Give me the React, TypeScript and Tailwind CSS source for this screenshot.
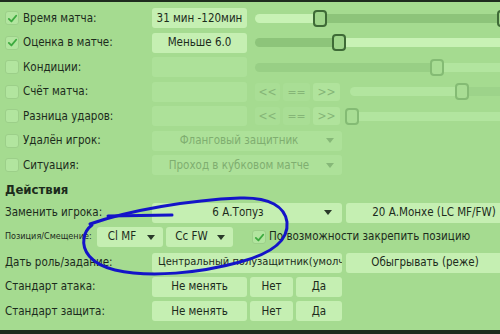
import React from "react";

const font = { fontFamily: '"DejaVu Sans Condensed", "Open Sans", sans-serif' };

function Check({ checked }: { checked?: boolean }) {
  return (
    <div className="w-[14px] h-[14px] shrink-0 rounded-[3px] bg-[#b2e59f] border border-[#9ccf89] flex items-center justify-center">
      {checked && (
        <svg width="11" height="11" viewBox="0 0 12 12">
          <path d="M2 6.5 L4.8 9.2 L10 3" fill="none" stroke="#3daa3f" strokeWidth="2" strokeLinecap="round" strokeLinejoin="round" />
        </svg>
      )}
    </div>
  );
}

function Btn({ children, className = "", faded }: { children?: React.ReactNode; className?: string; faded?: boolean }) {
  return (
    <div
      className={`h-[20px] shrink-0 rounded-[3px] flex items-center justify-center text-[11.5px] whitespace-nowrap overflow-hidden ${
        faded ? "bg-[#ade199] text-[#7fae70]" : "bg-[#c5efb2] text-[#1c2b1c]"
      } ${className}`}
    >
      {children}
    </div>
  );
}

function Arrow({ faded }: { faded?: boolean }) {
  return (
    <svg width="8" height="5" viewBox="0 0 8 5" className="shrink-0">
      <path d="M0 0 H8 L4 5 Z" fill={faded ? "#86b878" : "#2a3a2a"} />
    </svg>
  );
}

function Drop({ text, className = "", faded, arrowPad = "pr-[8px]" }: { text: string; className?: string; faded?: boolean; arrowPad?: string }) {
  return (
    <div
      className={`h-[20px] shrink-0 rounded-[3px] flex items-center text-[11.5px] whitespace-nowrap ${arrowPad} ${
        faded ? "bg-[#ade199] text-[#7fae70]" : "bg-[#c5efb2] text-[#1c2b1c]"
      } ${className}`}
    >
      <span className="flex-1 text-center">{text}</span>
      <Arrow faded={faded} />
    </div>
  );
}

function Thumb({ faded }: { faded?: boolean }) {
  return (
    <div
      className={`w-[14px] h-[17px] shrink-0 rounded-[4px] border-2 ${
        faded ? "border-[#84bb74] bg-[#a8dd94]" : "border-[#3e6a36] bg-[#9fd68b]"
      }`}
    />
  );
}

function Slider({
  pos,
  faded,
  endThumb,
  left,
  right,
}: {
  pos: number;
  faded?: boolean;
  endThumb?: boolean;
  left: string;
  right: string;
}) {
  return (
    <div className="flex-1 relative h-[17px] flex items-center">
      <div className="flex w-full h-[9px]">
        <div className={`h-full rounded-l-full ${left}`} style={{ width: pos + 6 }} />
        <div className={`h-full flex-1 ${right}`} />
      </div>
      <div className="absolute top-0" style={{ left: pos }}>
        <Thumb faded={faded} />
      </div>
      {endThumb && (
        <div className="absolute top-0 left-[242px]">
          <Thumb faded={faded} />
        </div>
      )}
    </div>
  );
}

function Label({ checked, text }: { checked?: boolean; text: string }) {
  return (
    <div className="w-[152px] shrink-0 flex items-center pl-[5px] gap-[4px]">
      <Check checked={checked} />
      <span className="text-[11.5px] text-[#1c2b1c]">{text}</span>
    </div>
  );
}

function Nav() {
  return (
    <div className="flex gap-[3px] text-[12px] text-[#85b577] shrink-0">
      <div className="w-[25px] h-[18px] rounded-[3px] bg-[#a9de95] flex items-center justify-center">&lt;&lt;</div>
      <div className="w-[27px] h-[18px] rounded-[3px] bg-[#a9de95] flex items-center justify-center">==</div>
      <div className="w-[27px] h-[18px] rounded-[3px] bg-[#b0e39c] flex items-center justify-center">&gt;&gt;</div>
    </div>
  );
}

export default function App() {
  return (
    <div className="w-[500px] h-[334px] overflow-hidden relative bg-[#a5db90] border-t-[2px] border-b-[4px] border-[#1e2b1e]" style={font}>
      <div className="pt-[4px]">
        <div className="h-[24.5px] flex items-center">
          <Label checked text="Время матча:" />
          <Btn className="w-[95px]">31 мин -120мин</Btn>
          <div className="ml-[8px] flex-1 flex">
            <Slider pos={58} endThumb left="bg-[#c8f2b5]" right="bg-[#8dc47a]" />
          </div>
        </div>
        <div className="h-[24.5px] flex items-center">
          <Label checked text="Оценка в матче:" />
          <Btn className="w-[95px]">Меньше 6.0</Btn>
          <div className="ml-[8px] flex-1 flex">
            <Slider pos={77} left="bg-[#8dc47a]" right="bg-[#c8f2b5]" />
          </div>
        </div>
        <div className="h-[24.5px] flex items-center">
          <Label text="Кондиции:" />
          <Btn className="w-[95px]" faded />
          <div className="ml-[8px] flex-1 flex">
            <Slider pos={175} faded left="bg-[#98cf85]" right="bg-[#b2e59f]" />
          </div>
        </div>
        <div className="h-[24.5px] flex items-center">
          <Label text="Счёт матча:" />
          <Btn className="w-[95px]" faded />
          <div className="ml-[8px] flex-1 flex items-center">
            <Nav />
            <div className="ml-[10px] flex-1 flex">
              <Slider pos={105} faded left="bg-[#b2e59f]" right="bg-[#9dd38a]" />
            </div>
          </div>
        </div>
        <div className="h-[24.5px] flex items-center">
          <Label text="Разница ударов:" />
          <Btn className="w-[95px]" faded />
          <div className="ml-[8px] flex-1 flex items-center">
            <Nav />
            <div className="ml-[5px] flex-1 flex">
              <Slider pos={0} faded left="bg-[#b2e59f]" right="bg-[#b2e59f]" />
            </div>
          </div>
        </div>
        <div className="h-[24.5px] flex items-center">
          <Label text="Удалён игрок:" />
          <Drop faded text="Фланговый защитник" className="w-[190px]" />
        </div>
        <div className="h-[24.5px] flex items-center">
          <Label text="Ситуация:" />
          <Drop faded text="Проход в кубковом матче" className="w-[190px]" />
        </div>
        <div className="h-[24px] flex items-center pl-[5px] text-[13px] font-bold text-[#1c2b1c]">Действия</div>
        <div className="h-[22px] flex items-center">
          <div className="w-[152px] shrink-0 pl-[5px] text-[11.5px] text-[#1c2b1c]">Заменить игрока:</div>
          <Drop text="6 А.Топуз" className="w-[190px]" arrowPad="pr-[10px]" />
          <Btn className="ml-[4px] w-[176px]">20 А.Монхе (LC MF/FW)</Btn>
        </div>
        <div className="h-[27px] flex items-center">
          <div className="w-[92px] shrink-0 pl-[5px] text-[9px] text-[#1c2b1c] whitespace-nowrap">Позиция/Смещение:</div>
          <Drop text="Cl MF" className="ml-[5px] w-[66px]" />
          <Drop text="Cc FW" className="ml-[3px] w-[67px]" />
          <div className="ml-[19px] flex items-center gap-[3px]">
            <Check checked />
            <span className="text-[11.5px] text-[#1c2b1c]">По возможности закрепить позицию</span>
          </div>
        </div>
        <div className="h-[24px] flex items-center">
          <div className="w-[152px] shrink-0 pl-[5px] text-[11.5px] text-[#1c2b1c]">Дать роль/задание:</div>
          <Btn className="w-[190px] !justify-start pl-[6px] !text-[11px]">Центральный полузащитник(умолч</Btn>
          <Btn className="ml-[4px] w-[158px]">Обыгрывать (реже)</Btn>
        </div>
        <div className="h-[24.5px] flex items-center">
          <div className="w-[152px] shrink-0 pl-[5px] text-[11.5px] text-[#1c2b1c]">Стандарт атака:</div>
          <Btn className="w-[95px]">Не менять</Btn>
          <Btn className="ml-[3px] w-[43px]">Нет</Btn>
          <Btn className="ml-[3px] w-[46px]">Да</Btn>
        </div>
        <div className="h-[24.5px] flex items-center">
          <div className="w-[152px] shrink-0 pl-[5px] text-[11.5px] text-[#1c2b1c]">Стандарт защита:</div>
          <Btn className="w-[95px]">Не менять</Btn>
          <Btn className="ml-[3px] w-[43px]">Нет</Btn>
          <Btn className="ml-[3px] w-[46px]">Да</Btn>
        </div>
      </div>
      <svg className="absolute left-0 top-0 pointer-events-none" width="500" height="334" viewBox="0 0 500 334">
        <path
          d="M90 222 C 130 208, 190 198, 240 196 C 270 195, 285 205, 287 220 C 289 240, 270 252, 240 260 C 200 271, 150 276, 115 268 C 90 262, 82 248, 84 236 C 85 230, 88 226, 92 223"
          fill="none"
          stroke="#1414c8"
          strokeWidth="3"
          strokeLinecap="round"
        />
        <path d="M108 214 L172 213" fill="none" stroke="#1414c8" strokeWidth="3" strokeLinecap="round" />
      </svg>
    </div>
  );
}
